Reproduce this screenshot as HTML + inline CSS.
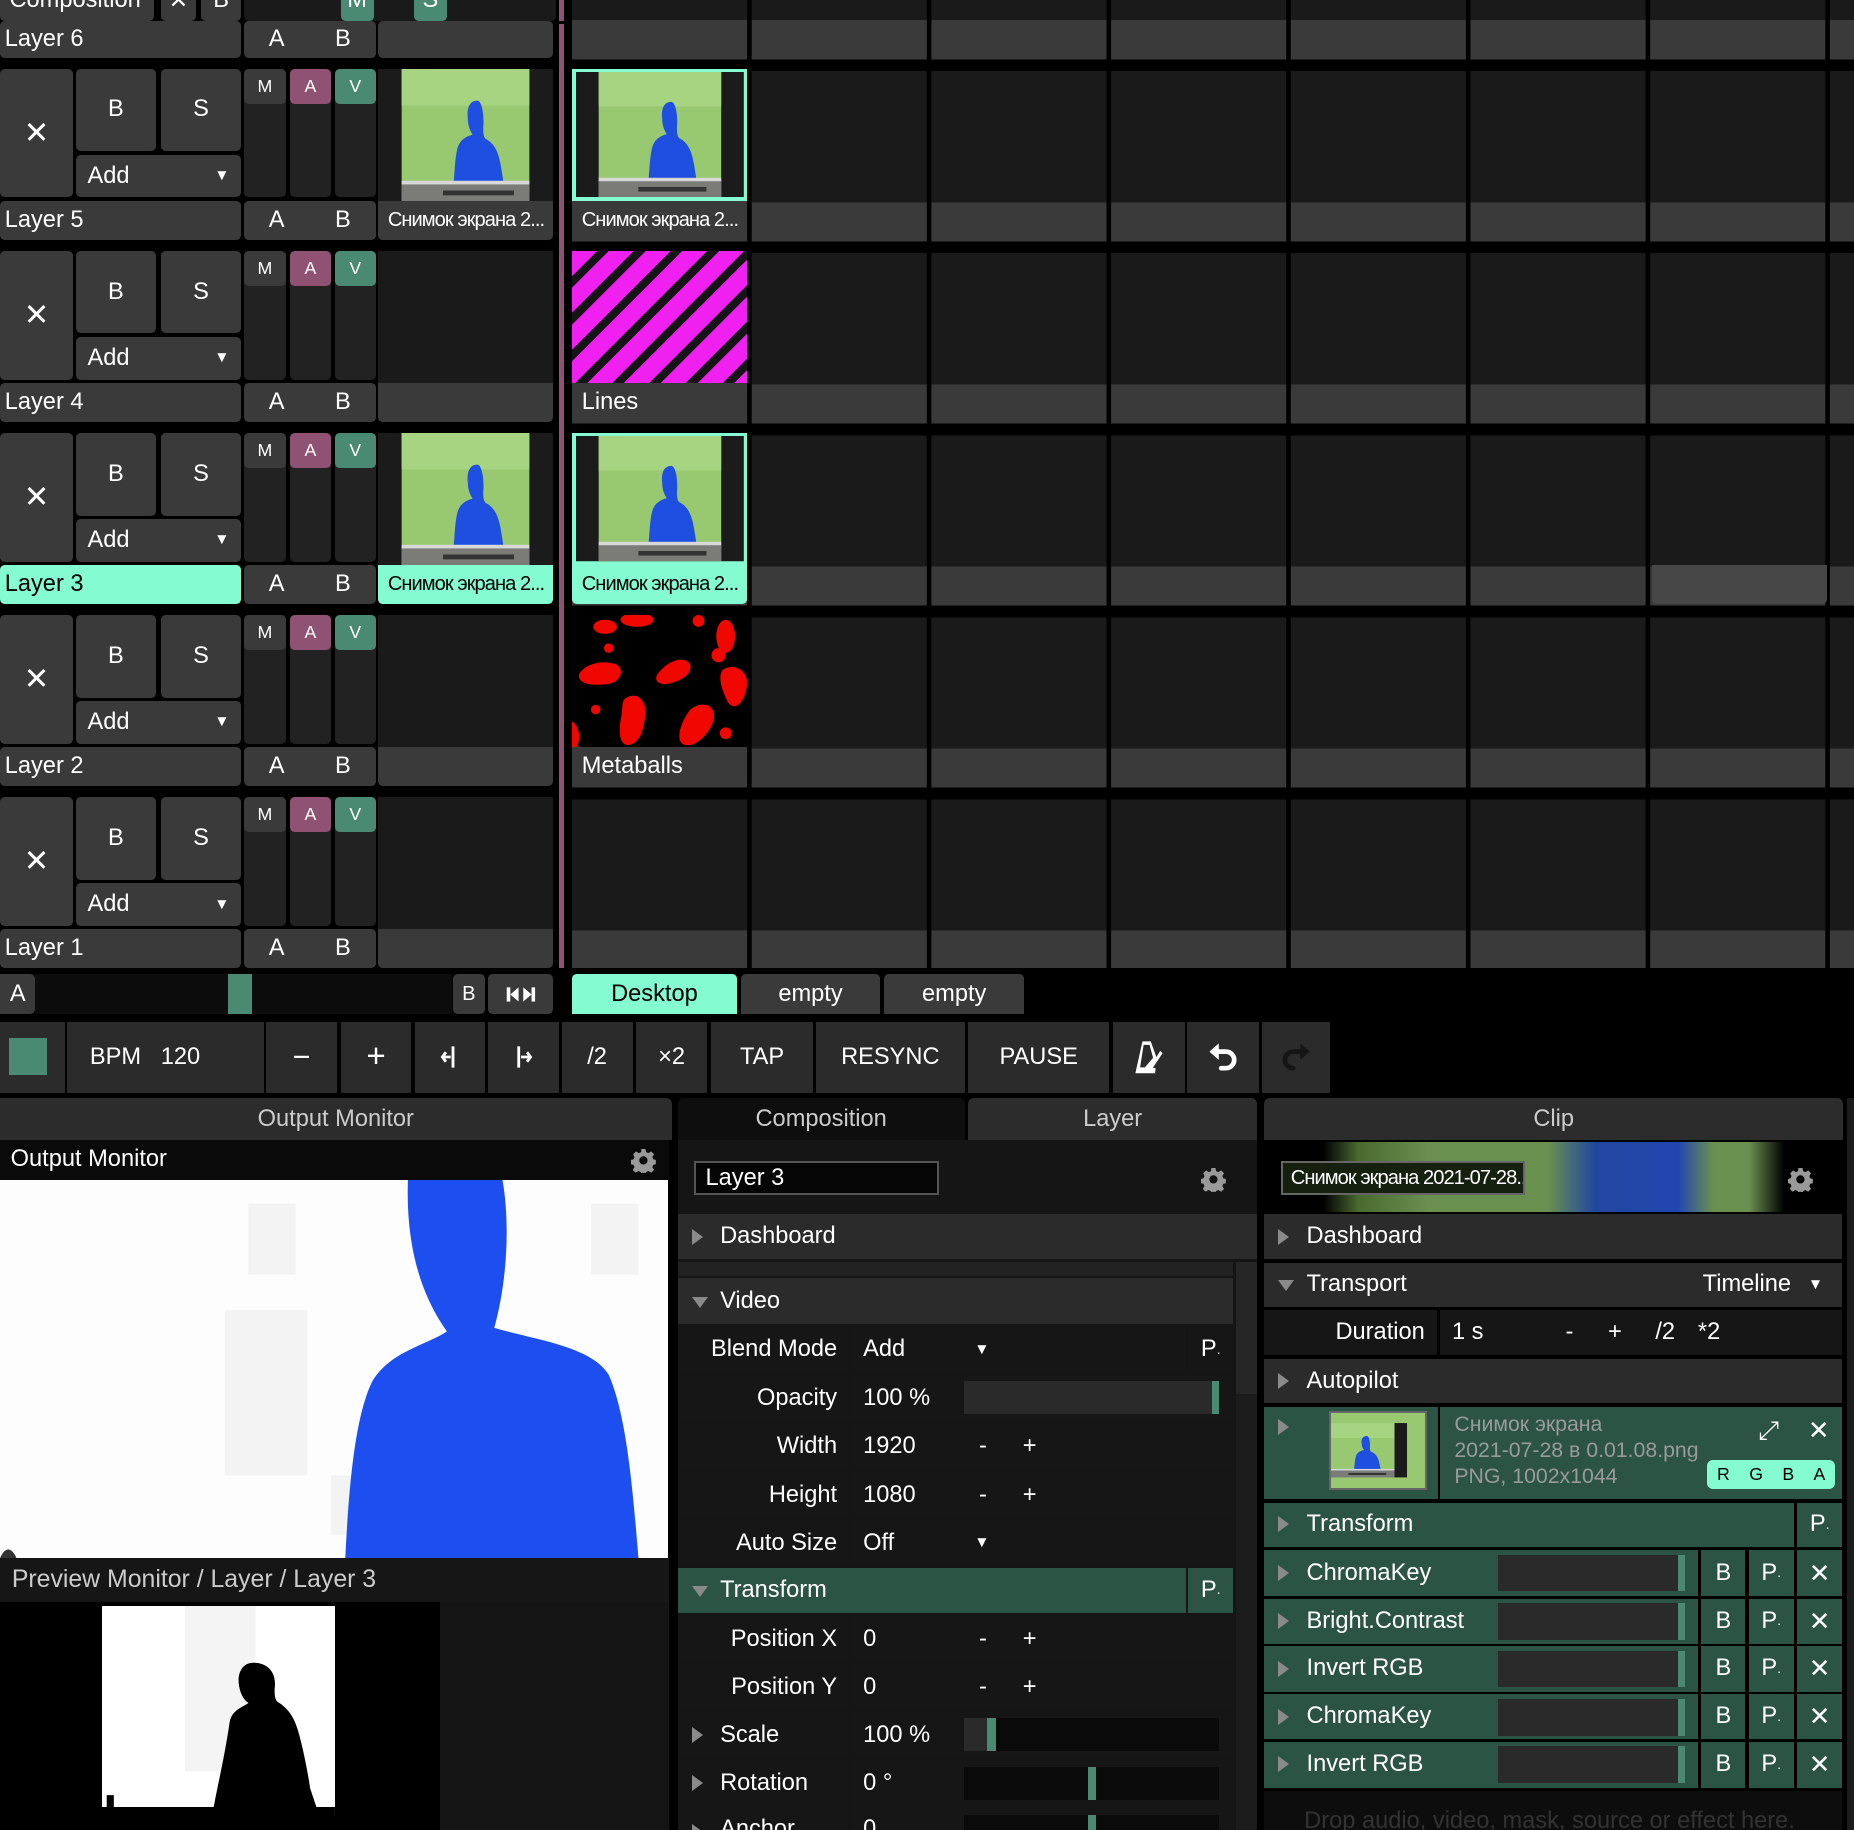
<!DOCTYPE html>
<html><head><meta charset="utf-8">
<style>
html,body{margin:0;padding:0;background:#000;width:1854px;height:1830px;overflow:hidden}
#w{position:relative;width:1568px;height:1548px;zoom:1.18240;overflow:hidden;background:#000;font-family:"Liberation Sans","Noto Sans CJK SC",sans-serif;color:#fff;font-size:20px}
#w div{position:absolute;box-sizing:border-box}
.b{background:#3a3a3a;border-radius:4px;display:flex;align-items:center;justify-content:center}
.l{justify-content:flex-start;padding-left:4px}
.d{background:#222;border-radius:4px}
.m{background:#84fbd1!important;color:#000}
.pk{background:#8f5273!important}
.gr{background:#4a8a72!important}
.sm{font-size:15px}
.nm{font-size:17px;letter-spacing:-0.8px;justify-content:flex-start;padding-left:8px;white-space:nowrap;overflow:hidden}
.lab{background:#161616;justify-content:flex-end;padding-right:10px;display:flex;align-items:center}
.val{background:#161616;display:flex;align-items:center;padding-left:10px}
.hd{background:#2b2b2b;display:flex;align-items:center;padding-left:36px}
.tri{position:absolute;left:12px;top:50%;margin-top:-7px;width:0;height:0;border-top:7px solid transparent;border-bottom:7px solid transparent;border-left:10px solid #8a8a8a}
.trd{position:absolute;left:12px;top:50%;margin-top:-4px;width:0;height:0;border-left:7px solid transparent;border-right:7px solid transparent;border-top:10px solid #8a8a8a}
.g{background:#2b5445}
.tb{background:#2b2b2b;display:flex;align-items:center;justify-content:center;top:864px;height:60px}
</style></head><body><div id="w">
<svg width="0" height="0" style="position:absolute">
<defs>
<symbol id="th" viewBox="0 0 148 109">
<rect width="148" height="109" fill="#1b1b1b"/>
<rect x="20" y="0" width="108" height="109" fill="#98c970"/>
<rect x="20" y="0" width="108" height="30" fill="#a6d480"/>
<path d="M84 26c-7 0-9 7-8 15 0 6 2 10 4 13-7 2-11 5-13 12-2 9-2 17-3 27l-1 10h44c0-7-2-16-3-23-2-11-5-18-12-22-3-1-3-6-3-10 1-9-1-22-5-22z" fill="#1e4fe0"/>
<rect x="20" y="94" width="108" height="15" fill="#7b7b78"/>
<rect x="20" y="92" width="108" height="3" fill="#d8d8d8"/>
<rect x="55" y="100" width="60" height="4" fill="#333"/>
</symbol>
<symbol id="gear" viewBox="0 0 24 24"><path fill="#9a9a9a" d="M10 1h4l.6 3 2.3 1 2.6-1.7 2.8 2.8L20.6 8.7l1 2.3 3 .6v4l-3 .6-1 2.3 1.7 2.6-2.8 2.8-2.6-1.7-2.3 1-.6 3h-4l-.6-3-2.3-1-2.6 1.7-2.8-2.8 1.7-2.6-1-2.3-3-.6v-4l3-.6 1-2.3L2.1 6.1l2.8-2.8L7.5 5l2.3-1zM12 8a4 4 0 100 8 4 4 0 000-8z"/></symbol>
</defs></svg>

<!-- header row -->
<div class="b l" style="left:0;top:-18px;width:130px;height:36px;padding-left:8px">Composition</div>
<div class="b" style="left:136px;top:-18px;width:30px;height:36px">✕</div>
<div class="b" style="left:170px;top:-18px;width:34px;height:36px">B</div>
<div class="b" style="left:206px;top:-18px;width:264px;height:36px;background:#1a1a1a"></div>
<div class="b gr" style="left:288px;top:-18px;width:28px;height:36px">M</div>
<div class="b gr" style="left:350px;top:-18px;width:28px;height:36px">S</div>
<div style="left:473px;top:0;width:4px;height:18px;background:#8f5273"></div>
<div class="b m" style="left:484px;top:-18px;width:148px;height:36px">Column 1</div>
<div class="b" style="left:636px;top:-18px;width:148px;height:36px">Column 2</div>
<div class="b" style="left:788px;top:-18px;width:148px;height:36px">Column 3</div>
<div class="b" style="left:940px;top:-18px;width:148px;height:36px">Column 4</div>
<div class="b" style="left:1092px;top:-18px;width:148px;height:36px">Column 5</div>
<div class="b" style="left:1244px;top:-18px;width:148px;height:36px">Column 6</div>
<div class="b" style="left:1397px;top:-18px;width:148px;height:36px">Column 7</div>
<div class="b" style="left:1549px;top:-18px;width:40px;height:36px"></div>

<!-- grid background -->
<div style="left:484px;top:-94px;width:1084px;height:913px;background:repeating-linear-gradient(90deg,transparent 0 148px,#000 148px 152px),repeating-linear-gradient(180deg,#1a1a1a 0 111px,#3a3a3a 111px 144px,#000 144px 154px)"></div>
<div style="left:473px;top:20px;width:4px;height:799px;background:#8f5273"></div>
<div style="left:1397px;top:478px;width:148px;height:33px;background:#474747;border-radius:0 0 4px 4px"></div>

<!-- Layer 6 partial -->
<div class="b l" style="left:0;top:18px;width:204px;height:31px">Layer 6</div>
<div class="b" style="left:206px;top:18px;width:112px;height:31px;justify-content:space-around">A<span>B</span></div>
<div class="b" style="left:320px;top:18px;width:148px;height:31px"></div>

<!-- L5 T=58 -->
<div class="b" style="left:0;top:58px;width:62px;height:109px;font-size:26px">✕</div>
<div class="b" style="left:64px;top:58px;width:68px;height:70px">B</div>
<div class="b" style="left:136px;top:58px;width:68px;height:70px">S</div>
<div class="b l" style="left:64px;top:131px;width:140px;height:36px;padding-left:10px">Add<span style="position:absolute;right:10px;font-size:13px">▼</span></div>
<div class="d" style="left:206px;top:58px;width:36px;height:109px"></div><div class="d" style="left:245px;top:58px;width:35px;height:109px"></div><div class="d" style="left:283px;top:58px;width:35px;height:109px"></div>
<div class="b sm" style="left:206px;top:58px;width:36px;height:30px">M</div><div class="b sm pk" style="left:245px;top:58px;width:35px;height:30px">A</div><div class="b sm gr" style="left:283px;top:58px;width:35px;height:30px">V</div>
<div class="b l" style="left:0;top:170px;width:204px;height:33px">Layer 5</div>
<div class="b" style="left:206px;top:170px;width:112px;height:33px;justify-content:space-around">A<span>B</span></div>
<div style="left:320px;top:58px;width:148px;height:112px;background:#1b1b1b"><svg width="148" height="112" viewBox="0 0 148 109" preserveAspectRatio="none"><use href="#th"/></svg></div>
<div class="b nm" style="left:320px;top:170px;width:148px;height:33px;border-radius:0 0 4px 4px">Снимок экрана 2...</div>
<div style="left:484px;top:58px;width:148px;height:112px;background:#84fbd1;padding:3px 3px 0"><svg width="142" height="106" viewBox="0 0 148 109" preserveAspectRatio="none"><use href="#th"/></svg></div>
<div class="b nm" style="left:484px;top:170px;width:148px;height:33px;border-radius:0 0 4px 4px">Снимок экрана 2...</div>

<!-- L4 T=212 -->
<div class="b" style="left:0;top:212px;width:62px;height:109px;font-size:26px">✕</div>
<div class="b" style="left:64px;top:212px;width:68px;height:70px">B</div>
<div class="b" style="left:136px;top:212px;width:68px;height:70px">S</div>
<div class="b l" style="left:64px;top:285px;width:140px;height:36px;padding-left:10px">Add<span style="position:absolute;right:10px;font-size:13px">▼</span></div>
<div class="d" style="left:206px;top:212px;width:36px;height:109px"></div><div class="d" style="left:245px;top:212px;width:35px;height:109px"></div><div class="d" style="left:283px;top:212px;width:35px;height:109px"></div>
<div class="b sm" style="left:206px;top:212px;width:36px;height:30px">M</div><div class="b sm pk" style="left:245px;top:212px;width:35px;height:30px">A</div><div class="b sm gr" style="left:283px;top:212px;width:35px;height:30px">V</div>
<div class="b l" style="left:0;top:324px;width:204px;height:33px">Layer 4</div>
<div class="b" style="left:206px;top:324px;width:112px;height:33px;justify-content:space-around">A<span>B</span></div>
<div style="left:320px;top:212px;width:148px;height:112px;background:#1a1a1a"></div>
<div class="b" style="left:320px;top:324px;width:148px;height:33px;border-radius:0 0 4px 4px"></div>
<div style="left:484px;top:212px;width:148px;height:112px;background:repeating-linear-gradient(135deg,#f020f0 0 15px,#151515 15px 22px)"></div>
<div class="b nm" style="left:484px;top:324px;width:148px;height:33px;border-radius:0 0 4px 4px;font-size:20px;letter-spacing:0">Lines</div>

<!-- L3 T=366 -->
<div class="b" style="left:0;top:366px;width:62px;height:109px;font-size:26px">✕</div>
<div class="b" style="left:64px;top:366px;width:68px;height:70px">B</div>
<div class="b" style="left:136px;top:366px;width:68px;height:70px">S</div>
<div class="b l" style="left:64px;top:439px;width:140px;height:36px;padding-left:10px">Add<span style="position:absolute;right:10px;font-size:13px">▼</span></div>
<div class="d" style="left:206px;top:366px;width:36px;height:109px"></div><div class="d" style="left:245px;top:366px;width:35px;height:109px"></div><div class="d" style="left:283px;top:366px;width:35px;height:109px"></div>
<div class="b sm" style="left:206px;top:366px;width:36px;height:30px">M</div><div class="b sm pk" style="left:245px;top:366px;width:35px;height:30px">A</div><div class="b sm gr" style="left:283px;top:366px;width:35px;height:30px">V</div>
<div class="b l m" style="left:0;top:478px;width:204px;height:33px">Layer 3</div>
<div class="b" style="left:206px;top:478px;width:112px;height:33px;justify-content:space-around">A<span>B</span></div>
<div style="left:320px;top:366px;width:148px;height:112px;background:#1b1b1b"><svg width="148" height="112" viewBox="0 0 148 109" preserveAspectRatio="none"><use href="#th"/></svg></div>
<div class="b nm m" style="left:320px;top:478px;width:148px;height:33px;border-radius:0 0 4px 4px">Снимок экрана 2...</div>
<div style="left:484px;top:366px;width:148px;height:112px;background:#84fbd1;padding:3px 3px 0"><svg width="142" height="106" viewBox="0 0 148 109" preserveAspectRatio="none"><use href="#th"/></svg></div>
<div class="b nm m" style="left:484px;top:478px;width:148px;height:33px;border-radius:0 0 4px 4px">Снимок экрана 2...</div>

<!-- L2 T=520 -->
<div class="b" style="left:0;top:520px;width:62px;height:109px;font-size:26px">✕</div>
<div class="b" style="left:64px;top:520px;width:68px;height:70px">B</div>
<div class="b" style="left:136px;top:520px;width:68px;height:70px">S</div>
<div class="b l" style="left:64px;top:593px;width:140px;height:36px;padding-left:10px">Add<span style="position:absolute;right:10px;font-size:13px">▼</span></div>
<div class="d" style="left:206px;top:520px;width:36px;height:109px"></div><div class="d" style="left:245px;top:520px;width:35px;height:109px"></div><div class="d" style="left:283px;top:520px;width:35px;height:109px"></div>
<div class="b sm" style="left:206px;top:520px;width:36px;height:30px">M</div><div class="b sm pk" style="left:245px;top:520px;width:35px;height:30px">A</div><div class="b sm gr" style="left:283px;top:520px;width:35px;height:30px">V</div>
<div class="b l" style="left:0;top:632px;width:204px;height:33px">Layer 2</div>
<div class="b" style="left:206px;top:632px;width:112px;height:33px;justify-content:space-around">A<span>B</span></div>
<div style="left:320px;top:520px;width:148px;height:112px;background:#1a1a1a"></div>
<div class="b" style="left:320px;top:632px;width:148px;height:33px;border-radius:0 0 4px 4px"></div>
<div style="left:484px;top:520px;width:148px;height:112px;background:#000"><svg width="148" height="112" viewBox="0 0 148 112"><g fill="#f00800">
<ellipse cx="28" cy="10" rx="10" ry="6"/><ellipse cx="55" cy="4" rx="14" ry="6"/><circle cx="107" cy="5" r="5"/><ellipse cx="130" cy="18" rx="8" ry="14"/><circle cx="31" cy="28" r="4"/><circle cx="124" cy="34" r="6"/>
<path d="M6 50c6-10 22-12 32-8 6 4 4 14-6 16-10 2-28 2-26-8z"/><path d="M74 48c8-10 22-14 26-6 2 8-8 14-18 16s-14-4-8-10z"/><path d="M128 46c10-6 22 2 20 14-2 14-10 22-16 14-4-8-10-22-4-28z"/>
<circle cx="20" cy="80" r="4"/><path d="M46 70c10-6 18 4 16 16-2 12-4 22-14 24-10 0-8-16-6-26 1-8 0-12 4-14z"/><path d="M100 80c10-8 22-4 20 8-2 10-14 24-24 22-10-2-4-20 4-30z"/><path d="M0 90c6 4 8 14 4 22H0z"/><circle cx="130" cy="100" r="5"/></g></svg></div>
<div class="b nm" style="left:484px;top:632px;width:148px;height:33px;border-radius:0 0 4px 4px;font-size:20px;letter-spacing:0">Metaballs</div>

<!-- L1 T=674 -->
<div class="b" style="left:0;top:674px;width:62px;height:109px;font-size:26px">✕</div>
<div class="b" style="left:64px;top:674px;width:68px;height:70px">B</div>
<div class="b" style="left:136px;top:674px;width:68px;height:70px">S</div>
<div class="b l" style="left:64px;top:747px;width:140px;height:36px;padding-left:10px">Add<span style="position:absolute;right:10px;font-size:13px">▼</span></div>
<div class="d" style="left:206px;top:674px;width:36px;height:109px"></div><div class="d" style="left:245px;top:674px;width:35px;height:109px"></div><div class="d" style="left:283px;top:674px;width:35px;height:109px"></div>
<div class="b sm" style="left:206px;top:674px;width:36px;height:30px">M</div><div class="b sm pk" style="left:245px;top:674px;width:35px;height:30px">A</div><div class="b sm gr" style="left:283px;top:674px;width:35px;height:30px">V</div>
<div class="b l" style="left:0;top:786px;width:204px;height:33px">Layer 1</div>
<div class="b" style="left:206px;top:786px;width:112px;height:33px;justify-content:space-around">A<span>B</span></div>
<div style="left:320px;top:674px;width:148px;height:112px;background:#1a1a1a"></div>
<div class="b" style="left:320px;top:786px;width:148px;height:33px;border-radius:0 0 4px 4px"></div>

<!-- crossfader row -->
<div class="b" style="left:0;top:824px;width:30px;height:34px;border-radius:0 4px 4px 0">A</div>
<div style="left:30px;top:824px;width:352px;height:34px;background:#0c0c0c"></div>
<div style="left:193px;top:824px;width:20px;height:34px;background:#4a8a72"></div>
<div class="b sm" style="left:383px;top:824px;width:27px;height:34px;font-size:17px">B</div>
<div class="b" style="left:413px;top:824px;width:55px;height:34px"><svg width="32" height="16" viewBox="0 0 32 16"><g fill="#fff"><rect x="4" y="2" width="3" height="12"/><path d="M14 2v12L7 8z"/><rect x="25" y="2" width="3" height="12"/><path d="M18 2v12l7-6z"/></g></svg></div>
<div class="b m" style="left:484px;top:824px;width:139px;height:34px;border-radius:4px 4px 0 0">Desktop</div>
<div class="b" style="left:627px;top:824px;width:117px;height:34px;border-radius:4px 4px 0 0">empty</div>
<div class="b" style="left:748px;top:824px;width:118px;height:34px;border-radius:4px 4px 0 0">empty</div>

<!-- toolbar -->
<div class="tb" style="left:0;width:55px"><div style="left:8px;top:14px;width:32px;height:31px;background:#4a8a72"></div></div>
<div class="tb" style="left:57px;width:166px;justify-content:flex-start;padding-left:19px">BPM&nbsp;&nbsp;&nbsp;120</div>
<div class="tb" style="left:225px;width:60px;font-size:26px">−</div>
<div class="tb" style="left:288px;width:60px;font-size:28px">+</div>
<div class="tb" style="left:351px;width:59px"><svg width="16" height="22" viewBox="0 0 16 22"><g stroke="#fff" stroke-width="2.4" fill="none"><path d="M11 2v18"/><path d="M2 11h7M5 7l-3 4 3 4"/></g></svg></div>
<div class="tb" style="left:413px;width:60px"><svg width="16" height="22" viewBox="0 0 16 22"><g stroke="#fff" stroke-width="2.4" fill="none"><path d="M4 2v18"/><path d="M6 11h8M11 7l3 4-3 4"/></g></svg></div>
<div class="tb" style="left:475px;width:60px">/2</div>
<div class="tb" style="left:538px;width:60px">×2</div>
<div class="tb" style="left:601px;width:87px">TAP</div>
<div class="tb" style="left:690px;width:126px">RESYNC</div>
<div class="tb" style="left:819px;width:119px">PAUSE</div>
<div class="tb" style="left:941px;width:61px"><svg width="26" height="30" viewBox="0 0 26 30"><path d="M8 2h7l5 14-3 4 6-10 2 2-8 12 2 5H2z" fill="#fff"/><path d="M9 5h5l3 11-7 8H6z" fill="#2b2b2b"/><path d="M8 26h11" stroke="#fff" stroke-width="3"/></svg></div>
<div class="tb" style="left:1004px;width:61px"><svg width="28" height="28" viewBox="0 0 28 28"><path d="M8 9h8a7 7 0 010 14h-4" stroke="#fff" stroke-width="4" fill="none" stroke-linecap="round"/><path d="M2 9l8-7v14z" fill="#fff"/></svg></div>
<div class="tb" style="left:1067px;width:58px"><svg width="28" height="28" viewBox="0 0 28 28"><path d="M20 9h-8a7 7 0 000 14" stroke="#151515" stroke-width="4" fill="none" stroke-linecap="round"/><path d="M26 9l-8-7v14z" fill="#151515"/></svg></div>

<!-- Output monitor panel -->
<div style="left:0;top:929px;width:568px;height:35px;background:#2c2c2c;border-radius:0 5px 0 0;color:#ccc;display:flex;align-items:center;justify-content:center">Output Monitor</div>
<div style="left:0;top:964px;width:566px;height:34px;background:#0a0a0a;display:flex;align-items:center;padding-left:9px">Output Monitor</div>
<svg style="position:absolute;left:534px;top:971px" width="21" height="21"><use href="#gear"/></svg>
<div style="left:0;top:998px;width:565px;height:320px;background:#fdfdfd;overflow:hidden">
<svg width="565" height="320" viewBox="0 0 565 320">
<g fill="#f3f3f3"><rect x="210" y="20" width="40" height="60"/><rect x="190" y="110" width="70" height="140"/><rect x="280" y="250" width="30" height="50"/><rect x="500" y="20" width="40" height="60"/></g>
<path d="M345 0H425C432 40 428 90 418 125C450 135 500 140 515 165C530 200 535 260 540 320H292C295 260 300 200 315 170C330 145 360 140 378 128C358 100 343 60 345 0z" fill="#1d4ff0"/>
<path d="M0 320c4-10 10-10 14 0z" fill="#333"/>
</svg></div>
<div style="left:0;top:1318px;width:566px;height:37px;background:#161616;display:flex;align-items:center;padding-left:10px;color:#ccc;font-size:21px">Preview Monitor / Layer / Layer 3</div>
<div style="left:0;top:1355px;width:372px;height:193px;background:#000"></div>
<div style="left:372px;top:1355px;width:194px;height:193px;background:#141414"></div>
<div style="left:86px;top:1358px;width:197px;height:177px;background:#fff;overflow:hidden">
<svg width="197" height="177" viewBox="0 0 197 177"><rect x="70" y="0" width="60" height="140" fill="#f4f4f4"/>
<path d="M128 48c-10 0-14 10-12 20 1 6 4 12 8 14-6 4-14 6-16 16-2 14-6 36-10 54l-4 20h88l-6-18c-2-14-6-34-10-48-4-14-10-20-16-24-4-2-4-6-4-12 2-14-6-22-18-22z" fill="#000"/>
<path d="M0 170h197v7H0zM4 160h6v12H4z" fill="#000"/></svg></div>

<!-- middle panel -->
<div style="left:573px;top:929px;width:243px;height:35px;background:#0e0e0e;border-radius:5px 5px 0 0;color:#ccc;display:flex;align-items:center;justify-content:center">Composition</div>
<div style="left:819px;top:929px;width:244px;height:35px;background:#2c2c2c;border-radius:5px 5px 0 0;color:#ccc;display:flex;align-items:center;justify-content:center">Layer</div>
<div style="left:573px;top:964px;width:490px;height:584px;background:#151515"></div>
<div style="left:587px;top:982px;width:207px;height:29px;background:#050505;border:2px solid #555;display:flex;align-items:center;padding-left:8px">Layer 3</div>
<svg style="position:absolute;left:1016px;top:987px" width="21" height="21"><use href="#gear"/></svg>
<div class="hd" style="left:573px;top:1027px;width:490px;height:38px"><span class="tri"></span>Dashboard</div>
<div style="left:573px;top:1067px;width:470px;height:12px;background:#222"></div>
<div style="left:1045px;top:1067px;width:18px;height:481px;background:#1c1c1c"></div>
<div style="left:1045px;top:1067px;width:18px;height:112px;background:#262626"></div>
<div class="hd" style="left:573px;top:1081px;width:470px;height:39px"><span class="trd"></span>Video</div>
<div class="lab" style="left:573px;top:1122px;width:145px;height:39px">Blend Mode</div><div class="val" style="left:720px;top:1122px;width:283px;height:39px">Add<span style="position:absolute;left:104px;font-size:13px">▼</span></div><div class="b" style="left:1005px;top:1122px;width:38px;height:39px;background:#161616;border-radius:0">P<span style="font-size:12px">.</span></div>
<div class="lab" style="left:573px;top:1163px;width:145px;height:39px">Opacity</div><div class="val" style="left:720px;top:1163px;width:323px;height:39px">100 %</div>
<div style="left:815px;top:1168px;width:216px;height:28px;background:#2a2a2a"></div><div style="left:1025px;top:1168px;width:6px;height:28px;background:#4a8a72"></div>
<div class="lab" style="left:573px;top:1204px;width:145px;height:39px">Width</div><div class="val" style="left:720px;top:1204px;width:323px;height:39px">1920<span style="position:absolute;left:108px">-</span><span style="position:absolute;left:145px">+</span></div>
<div class="lab" style="left:573px;top:1245px;width:145px;height:39px">Height</div><div class="val" style="left:720px;top:1245px;width:323px;height:39px">1080<span style="position:absolute;left:108px">-</span><span style="position:absolute;left:145px">+</span></div>
<div class="lab" style="left:573px;top:1286px;width:145px;height:38px">Auto Size</div><div class="val" style="left:720px;top:1286px;width:323px;height:38px">Off<span style="position:absolute;left:104px;font-size:13px">▼</span></div>
<div class="hd g" style="left:573px;top:1326px;width:430px;height:38px"><span class="trd"></span>Transform</div><div class="b g" style="left:1005px;top:1326px;width:38px;height:38px;border-radius:0">P<span style="font-size:12px">.</span></div>
<div class="lab" style="left:573px;top:1367px;width:145px;height:39px">Position X</div><div class="val" style="left:720px;top:1367px;width:323px;height:39px">0<span style="position:absolute;left:108px">-</span><span style="position:absolute;left:145px">+</span></div>
<div class="lab" style="left:573px;top:1408px;width:145px;height:38px">Position Y</div><div class="val" style="left:720px;top:1408px;width:323px;height:38px">0<span style="position:absolute;left:108px">-</span><span style="position:absolute;left:145px">+</span></div>
<div class="hd" style="left:573px;top:1448px;width:145px;height:39px;background:#161616"><span class="tri"></span>Scale</div><div class="val" style="left:720px;top:1448px;width:323px;height:39px">100 %</div>
<div style="left:815px;top:1453px;width:216px;height:28px;background:#0a0a0a"></div><div style="left:815px;top:1453px;width:22px;height:28px;background:#2a2a2a"></div><div style="left:835px;top:1453px;width:7px;height:28px;background:#4a8a72"></div>
<div class="hd" style="left:573px;top:1489px;width:145px;height:39px;background:#161616"><span class="tri"></span>Rotation</div><div class="val" style="left:720px;top:1489px;width:323px;height:39px">0 °</div>
<div style="left:815px;top:1494px;width:216px;height:28px;background:#0a0a0a"></div><div style="left:920px;top:1494px;width:7px;height:28px;background:#4a8a72"></div>
<div class="hd" style="left:573px;top:1530px;width:145px;height:39px;background:#161616;align-items:flex-start;padding-top:6px"><span class="tri" style="top:20px"></span>Anchor</div><div class="val" style="left:720px;top:1530px;width:323px;height:39px;align-items:flex-start;padding-top:6px">0</div>
<div style="left:815px;top:1535px;width:216px;height:28px;background:#0a0a0a"></div><div style="left:920px;top:1535px;width:7px;height:28px;background:#4a8a72"></div>

<!-- right panel -->
<div style="left:1069px;top:929px;width:490px;height:35px;background:#2c2c2c;border-radius:5px 5px 0 0;color:#ccc;display:flex;align-items:center;justify-content:center">Clip</div>
<div style="left:1069px;top:966px;width:489px;height:59px;background:linear-gradient(90deg,#000 0,#000 50px,#4a6a30 80px,#6a9050 140px,#6a9050 240px,#2246a0 280px,#2246b0 350px,#6a9050 380px,#6a9050 410px,#000 440px)"></div>
<div style="left:1083px;top:982px;width:207px;height:29px;background:#15200f;border:2px solid #666;display:flex;align-items:center;padding-left:7px;font-size:17px;letter-spacing:-0.8px;white-space:nowrap;overflow:hidden">Снимок экрана 2021-07-28...</div>
<svg style="position:absolute;left:1512px;top:987px" width="21" height="21"><use href="#gear"/></svg>
<div class="hd" style="left:1069px;top:1027px;width:489px;height:38px"><span class="tri"></span>Dashboard</div>
<div class="hd" style="left:1069px;top:1068px;width:489px;height:37px"><span class="trd"></span>Transport<span style="position:absolute;left:371px">Timeline</span><span style="position:absolute;left:460px;font-size:13px">▼</span></div>
<div class="lab" style="left:1069px;top:1108px;width:146px;height:38px">Duration</div><div class="val" style="left:1218px;top:1108px;width:340px;height:38px">1 s<span style="position:absolute;left:106px">-</span><span style="position:absolute;left:142px">+</span><span style="position:absolute;left:182px">/2</span><span style="position:absolute;left:218px">*2</span></div>
<div class="hd" style="left:1069px;top:1149px;width:489px;height:38px"><span class="tri"></span>Autopilot</div>
<div class="g" style="left:1069px;top:1190px;width:147px;height:78px"><span class="tri" style="top:17px"></span></div>
<div style="left:1124px;top:1193px;width:83px;height:67px;border:2px solid #666;overflow:hidden;background:#98c970"><svg width="79" height="63" viewBox="20 0 108 109" preserveAspectRatio="none"><use href="#th"/></svg></div>
<div class="g" style="left:1218px;top:1190px;width:340px;height:78px;color:#9a9a9a;font-size:18px;line-height:22px;padding:3px 0 0 12px">Снимок экрана<br>2021-07-28 в 0.01.08.png<br>PNG, 1002x1044</div>
<div style="left:1487px;top:1197px;font-size:22px;color:#fff">⤢</div>
<div style="left:1529px;top:1197px;font-size:22px;color:#fff">✕</div>
<div class="b m" style="left:1444px;top:1235px;width:108px;height:24px;font-size:15px;justify-content:space-around;border-radius:5px"><span>R</span><span>G</span><span>B</span><span>A</span></div>
<div class="hd g" style="left:1069px;top:1271px;width:448px;height:37px"><span class="tri"></span>Transform</div><div class="b g" style="left:1520px;top:1271px;width:38px;height:37px;border-radius:0">P<span style="font-size:12px">.</span></div>

<div class="hd g" style="left:1069px;top:1311px;width:367px;height:39px"><span class="tri"></span>ChromaKey</div>
<div class="hd g" style="left:1069px;top:1352px;width:367px;height:38px"><span class="tri"></span>Bright.Contrast</div>
<div class="hd g" style="left:1069px;top:1392px;width:367px;height:39px"><span class="tri"></span>Invert RGB</div>
<div class="hd g" style="left:1069px;top:1433px;width:367px;height:38px"><span class="tri"></span>ChromaKey</div>
<div class="hd g" style="left:1069px;top:1473px;width:367px;height:39px"><span class="tri"></span>Invert RGB</div>
<div style="left:1267px;top:1315px;width:158px;height:31px;background:#2a2a2a;border-right:6px solid #4a8a72"></div>
<div style="left:1267px;top:1356px;width:158px;height:31px;background:#2a2a2a;border-right:6px solid #4a8a72"></div>
<div style="left:1267px;top:1396px;width:158px;height:31px;background:#2a2a2a;border-right:6px solid #4a8a72"></div>
<div style="left:1267px;top:1437px;width:158px;height:31px;background:#2a2a2a;border-right:6px solid #4a8a72"></div>
<div style="left:1267px;top:1477px;width:158px;height:31px;background:#2a2a2a;border-right:6px solid #4a8a72"></div>

<div class="b g" style="left:1439px;top:1311px;width:37px;height:39px;border-radius:0">B</div><div class="b g" style="left:1479px;top:1311px;width:38px;height:39px;border-radius:0">P<span style="font-size:12px">.</span></div><div class="b g" style="left:1520px;top:1311px;width:38px;height:39px;border-radius:0;font-size:22px">✕</div>
<div class="b g" style="left:1439px;top:1352px;width:37px;height:38px;border-radius:0">B</div><div class="b g" style="left:1479px;top:1352px;width:38px;height:38px;border-radius:0">P<span style="font-size:12px">.</span></div><div class="b g" style="left:1520px;top:1352px;width:38px;height:38px;border-radius:0;font-size:22px">✕</div>
<div class="b g" style="left:1439px;top:1392px;width:37px;height:39px;border-radius:0">B</div><div class="b g" style="left:1479px;top:1392px;width:38px;height:39px;border-radius:0">P<span style="font-size:12px">.</span></div><div class="b g" style="left:1520px;top:1392px;width:38px;height:39px;border-radius:0;font-size:22px">✕</div>
<div class="b g" style="left:1439px;top:1433px;width:37px;height:38px;border-radius:0">B</div><div class="b g" style="left:1479px;top:1433px;width:38px;height:38px;border-radius:0">P<span style="font-size:12px">.</span></div><div class="b g" style="left:1520px;top:1433px;width:38px;height:38px;border-radius:0;font-size:22px">✕</div>
<div class="b g" style="left:1439px;top:1473px;width:37px;height:39px;border-radius:0">B</div><div class="b g" style="left:1479px;top:1473px;width:38px;height:39px;border-radius:0">P<span style="font-size:12px">.</span></div><div class="b g" style="left:1520px;top:1473px;width:38px;height:39px;border-radius:0;font-size:22px">✕</div>
<div style="left:1069px;top:1515px;width:489px;height:40px;background:#0d0d0d;color:#333;padding:14px 0 0 34px">Drop audio, video, mask, source or effect here.</div>
<div style="left:1562px;top:929px;width:6px;height:619px;background:#1c1c1c"></div>
</div></body></html>
